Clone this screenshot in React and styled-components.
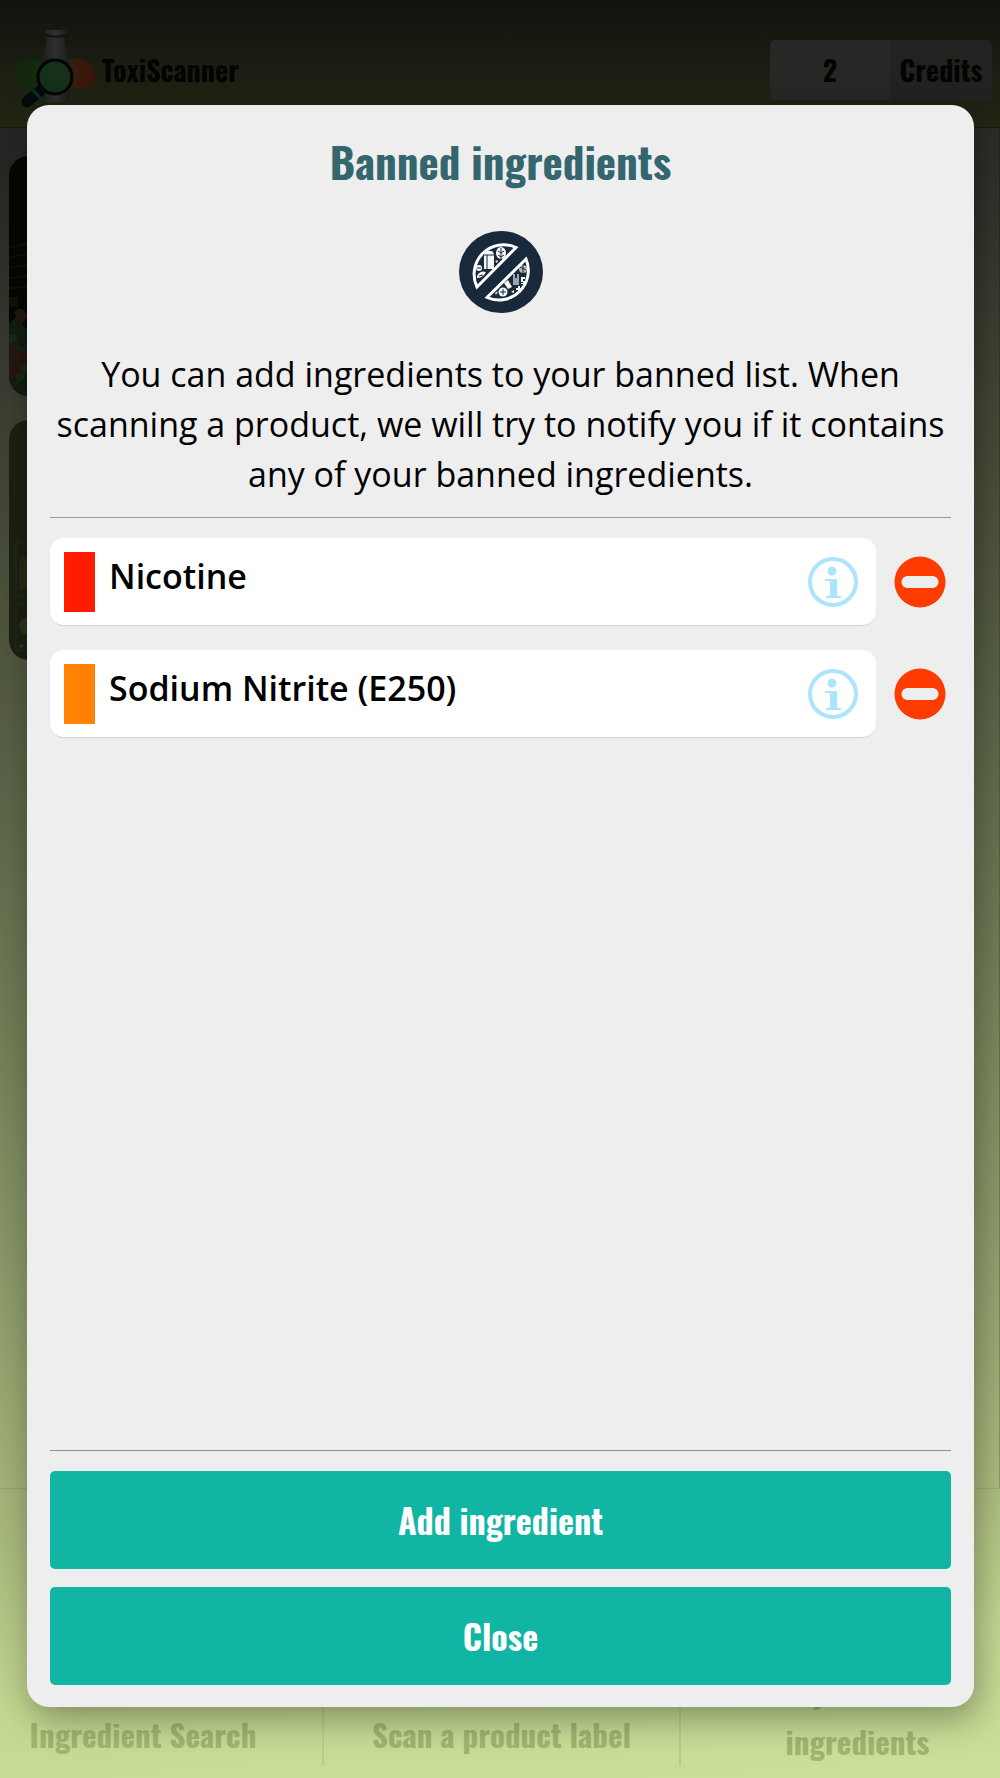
import React from "react";
import styled, { createGlobalStyle } from "styled-components";

const GlobalStyle = createGlobalStyle`
  * {
    box-sizing: border-box;
  }
  body {
    margin: 0;
    font-family: "Open Sans", "Noto Sans", sans-serif;
    color: #000;
  }
  button {
    font: inherit;
    cursor: pointer;
  }
`;
const headingFont = `"Oswald", "Liberation Sans Narrow", "Arial Narrow", sans-serif`;

const PageStyled = styled.div`
  position: relative;
  display: flex;
  flex-direction: column;
  min-height: 100vh;
  background: linear-gradient(
    175deg,
    #242524 8%,
    #3d4132 23%,
    #565e43 39%,
    #717c56 55%,
    #8e9c6a 70%,
    #a9ba7d 83%,
    #c3d791 92%,
    #cae099
  );
`;
const HeaderStyled = styled.header`
  display: flex;
  justify-content: space-between;
  align-items: center;
  height: 128px;
  padding: 12px 8px 0 11px;
  border-bottom: 1px solid #1a1c12;
  background: linear-gradient(#11120e, #1a1c12 45%, #232714);
  font: bold 28px ${headingFont};
  color: #040502;
`;
const BrandStyled = styled.div`
  display: flex;
  align-items: center;
  gap: 2px;
`;
const CreditsStyled = styled.div`
  display: flex;
  height: 60px;
  border-radius: 5px;
  overflow: hidden;
  line-height: 60px;
  text-align: center;
  background: #272726;
  .credits {
    &_count {
      width: 120px;
    }
    &_label {
      width: 102px;
      background: #222221;
    }
  }
`;
const MainStyled = styled.main`
  flex: 1;
  display: flex;
  flex-direction: column;
  gap: 24px;
  padding: 28px 14px 28px 9px;
  border-right: 1px solid #00000030;
`;
const CardStyled = styled.div`
  height: 240px;
  border-radius: 20px;
  overflow: hidden;
  background: ${(props) => props.$background};
  svg {
    display: block;
  }
`;
const FooterStyled = styled.nav`
  display: grid;
  grid-template-columns: 322fr 357fr 321fr;
  height: 290px;
  padding-bottom: 12px;
  border-top: 1px solid #00000014;
`;
const FooterLinkStyled = styled.a`
  display: flex;
  flex-direction: column;
  justify-content: flex-end;
  padding-bottom: ${(props) => (props.$tall ? 0 : 7)}px;
  text-align: center;
  font: bold 31px/50px ${headingFont};
  color: #9fb46e;
  text-decoration: none;
  &:first-child {
    padding-right: 36px;
  }
  &:last-child {
    padding-left: 34px;
  }
  & + & {
    border-left: 2px solid #b9cd88;
  }
`;
const OverlayStyled = styled.div`
  position: absolute;
  inset: 0;
  display: flex;
  padding: 105px 26px 71px 27px;
`;
const ModalStyled = styled.section`
  flex: 1;
  display: flex;
  flex-direction: column;
  padding: 22px 23px;
  border-radius: 22px;
  background: #eee;
  box-shadow: 4px 12px 34px rgba(0, 0, 0, 0.34);
`;
const TitleStyled = styled.h1`
  margin: 0;
  text-align: center;
  font: bold 43px/68px ${headingFont};
  color: #34666e;
`;
const BannedIconStyled = styled.svg`
  align-self: center;
  margin: 36px 0;
`;
const DescriptionStyled = styled.p`
  margin: 0;
  padding-bottom: 18px;
  border-bottom: 1px solid #999;
  text-align: center;
  font-size: 34px;
  line-height: 50px;
`;
const ListStyled = styled.ul`
  flex: 1;
  display: flex;
  flex-direction: column;
  gap: 24px;
  margin: 0;
  padding: 20px 0;
  list-style: none;
  border-bottom: 1px solid #8e9190;
`;
const ItemStyled = styled.li`
  display: flex;
  align-items: center;
  gap: 18px;
  padding-right: 5px;
`;
const IngredientStyled = styled.div`
  flex: 1;
  display: flex;
  align-items: center;
  gap: 14px;
  height: 88px;
  padding: 0 18px 0 14px;
  border-bottom: 1px solid #d4d4d4;
  border-radius: 14px;
  background: #fff;
`;
const LevelStyled = styled.span`
  width: 31px;
  height: 60px;
  background: ${(props) => props.$color};
`;
const NameStyled = styled.span`
  flex: 1;
  padding-bottom: 12px;
  font-size: 34px;
  font-weight: 600;
  line-height: 50px;
`;
const IconButtonStyled = styled.button`
  display: flex;
  padding: 0;
  border: 0;
  background: none;
`;
const ActionsStyled = styled.div`
  display: flex;
  flex-direction: column;
  gap: 18px;
  padding-top: 20px;
`;
const ActionButtonStyled = styled.button`
  height: 98px;
  padding: 0 0 2px;
  border: 0;
  border-radius: 5px;
  background: #10b5a4;
  color: #fff;
  font: bold 34px ${headingFont};
`;

const ingredients = [
  { id: 1, name: "Nicotine", color: "#ff1c00" },
  { id: 2, name: "Sodium Nitrite (E250)", color: "#ff8204" },
];

const Logo = () => (
  <svg width="89" height="80" viewBox="0 0 89 80" aria-hidden="true">
    <defs>
      <linearGradient id="bottle" x1="0" x2="1" y1="0" y2="0">
        <stop offset="0" stopColor="#1c1c1d" />
        <stop offset=".5" stopColor="#303031" />
        <stop offset="1" stopColor="#19191b" />
      </linearGradient>
      <linearGradient id="green" x1="0" x2="1" y1="0" y2="0">
        <stop offset="0" stopColor="#16240f" />
        <stop offset="1" stopColor="#132b0d" />
      </linearGradient>
      <linearGradient id="red" x1="0" x2="1" y1="0" y2="0">
        <stop offset="0" stopColor="#33220f" />
        <stop offset="1" stopColor="#3d1207" />
      </linearGradient>
    </defs>
    <path
      d="M29 30C17 27 8 32 4 38l1 3-4 5 3 3-1 5 5 2 3 4 18 1z"
      fill="url(#green)"
    />
    <path
      d="M55 30c9-1 17-1 21 1l0 3 5 0-1 4 6 2-3 3 3 4-4 2 1 5-6 0-2 4-20 2z"
      fill="url(#red)"
    />
    <path
      d="M35 5c-2-4 0-5 3-5h13c4 0 5 2 3 5l-1 3c1 12 6 20 6 33v23c0 6-3 8-7 8H37c-5 0-7-2-7-8V41c0-12 5-21 6-33z"
      fill="url(#bottle)"
    />
    <path d="M35 5c6 2 14 2 19 0" stroke="#111" strokeWidth="2" fill="none" />
    <circle cx="44" cy="47" r="17" fill="#15301a" stroke="#020302" strokeWidth="3" />
    <path d="M38 38h13v17H38zM41 42h8M41 46h8M41 50h8" stroke="#18361a" fill="none" />
    <path d="M29 61L16 72" stroke="#050b0d" strokeWidth="11" strokeLinecap="round" />
    <path d="M22 60l8 9" stroke="#0a302b" strokeWidth="3" />
  </svg>
);

const Groceries = () => (
  <svg width="60" height="240" viewBox="0 0 60 240" aria-hidden="true">
    <g stroke="#101009" strokeWidth="2">
      <path d="M0 92l60-16M0 102l60-14M0 112l60-10M0 122l60-7M0 132l60-4" />
    </g>
    <path d="M0 141h9v10H0z" fill="#101208" />
    <path d="M0 168q9-12 14 0t14 0h32v72H0z" fill="#121c10" />
    <path d="M5 156q8-8 14 4l-8 10z" fill="#24180c" />
    <path d="M0 187l22 12-14 24H0z" fill="#26160e" />
    <path d="M0 186l24 14M24 206L2 234" stroke="#17211a" strokeWidth="3" />
    <g fill="#1a2811">
      <circle cx="15" cy="212" r="4" />
      <circle cx="11" cy="221" r="4" />
      <circle cx="4" cy="182" r="4" />
    </g>
    <path d="M8 240l52-26v26z" fill="#26160e" />
  </svg>
);

const ProductShelf = () => (
  <svg width="60" height="240" viewBox="0 0 60 240" aria-hidden="true">
    <g fill="none" stroke="#1b2716" strokeWidth="3">
      <path d="M7 122h53M7 176h53M7 122v54M7 184h53M7 184v46h53" />
    </g>
    <path d="M10 142q4-10 10 0v28H10z" fill="#252914" />
    <circle cx="19" cy="206" r="9" fill="#28331e" />
    <path d="M11 226h3M18 226h3" stroke="#2f3d2a" strokeWidth="3" />
  </svg>
);

const BannedIcon = () => (
  <BannedIconStyled width="84" height="82" viewBox="0 0 84 82" aria-hidden="true">
    <ellipse cx="42" cy="41" rx="42" ry="41" fill="#17293a" />
    <g fill="#17293a" stroke="#fff" strokeWidth="3">
      <path d="M57 16.500A29.500 29.500 0 0 0 18 56z" />
      <path d="M67 28A29.500 29.500 0 0 1 28 66.500z" />
    </g>
    <g fill="#f4f6f7">
      <path d="M25 23l2-3h6l2 3v15H25z" />
      <ellipse cx="42" cy="22" rx="5" ry="6" />
      <circle cx="20" cy="37" r="3" />
      <path d="M18 45q3-6 9-4-3 6-9 6zM49 20l2-1M36 30l3-1-1 3z" />
      <path d="M45 52l4-3 4 7-4 2z" />
      <path d="M54 43h2v4h2v-4h2v11h-6z" opacity=".6" />
      <circle cx="64" cy="38" r="4" opacity=".7" />
      <circle cx="44" cy="61" r="4.500" />
      <path d="M62 46h4v2h-2v2h2v3h-4v-1h2v-1h-2zM59 55h2v2h2v2h-2v2h-2v-2h-2v-2h2z" />
      <path d="M52 61l3-2v3zM36 62l3-2-2 4z" />
    </g>
    <g stroke="#17293a" fill="none">
      <path d="M24 24h12M28 24v14M42 17v11M39 20l3 2 3-2M39 24l3 2 3-2" />
      <path d="M44 58v6M41 61h6M20 45l4-1M18 37h4M61 36l6 3M64 34v8" />
    </g>
  </BannedIconStyled>
);

const InfoIcon = () => (
  <svg width="50" height="50" viewBox="0 0 50 50" fill="#abe4ff" aria-hidden="true">
    <circle cx="25" cy="25" r="23" fill="none" stroke="#abe4ff" strokeWidth="4" />
    <circle cx="24" cy="14" r="4.500" />
    <path d="M17 22h12v16c0 1 1 1 4 1v2H18v-2c3 0 4 0 4-1V26c0-2-1-2-5-2z" />
  </svg>
);

const RemoveIcon = () => (
  <svg width="52" height="52" viewBox="0 0 52 52" aria-hidden="true">
    <circle cx="26" cy="26" r="25.500" fill="#ff3b00" />
    <rect x="7.500" y="20" width="37" height="12" rx="6" fill="#eee" />
  </svg>
);

const App = () => {
  const [banned, setBanned] = React.useState(ingredients);
  const [visible, setVisible] = React.useState(true);

  const handleRemove = (id) => {
    setBanned(banned.filter((item) => item.id !== id));
  };

  return (
    <>
      <GlobalStyle />
      <PageStyled>
        <HeaderStyled>
          <BrandStyled>
            <Logo />
            <span>ToxiScanner</span>
          </BrandStyled>
          <CreditsStyled>
            <span className="credits_count">2</span>
            <span className="credits_label">Credits</span>
          </CreditsStyled>
        </HeaderStyled>
        <MainStyled>
          <CardStyled $background="linear-gradient(90deg, #050703 30%, #05070308)">
            <Groceries />
          </CardStyled>
          <CardStyled $background="linear-gradient(90deg, #1c2011 30%, #1c201108)">
            <ProductShelf />
          </CardStyled>
        </MainStyled>
        <FooterStyled>
          <FooterLinkStyled href="#search">Ingredient Search</FooterLinkStyled>
          <FooterLinkStyled href="#scan">Scan a product label</FooterLinkStyled>
          <FooterLinkStyled href="#banned" $tall>
            <span>My banned</span>
            <span>ingredients</span>
          </FooterLinkStyled>
        </FooterStyled>
        {visible && (
          <OverlayStyled>
            <ModalStyled role="dialog" aria-labelledby="banned-title">
              <TitleStyled id="banned-title">Banned ingredients</TitleStyled>
              <BannedIcon />
              <DescriptionStyled>
                You can add ingredients to your banned list. When scanning a
                product, we will try to notify you if it contains any of your
                banned ingredients.
              </DescriptionStyled>
              <ListStyled>
                {banned.map((item) => (
                  <ItemStyled key={item.id}>
                    <IngredientStyled>
                      <LevelStyled $color={item.color} />
                      <NameStyled>{item.name}</NameStyled>
                      <IconButtonStyled aria-label={`About ${item.name}`}>
                        <InfoIcon />
                      </IconButtonStyled>
                    </IngredientStyled>
                    <IconButtonStyled
                      aria-label={`Remove ${item.name}`}
                      onClick={() => handleRemove(item.id)}
                    >
                      <RemoveIcon />
                    </IconButtonStyled>
                  </ItemStyled>
                ))}
              </ListStyled>
              <ActionsStyled>
                <ActionButtonStyled>Add ingredient</ActionButtonStyled>
                <ActionButtonStyled onClick={() => setVisible(false)}>
                  Close
                </ActionButtonStyled>
              </ActionsStyled>
            </ModalStyled>
          </OverlayStyled>
        )}
      </PageStyled>
    </>
  );
};

export default App;
